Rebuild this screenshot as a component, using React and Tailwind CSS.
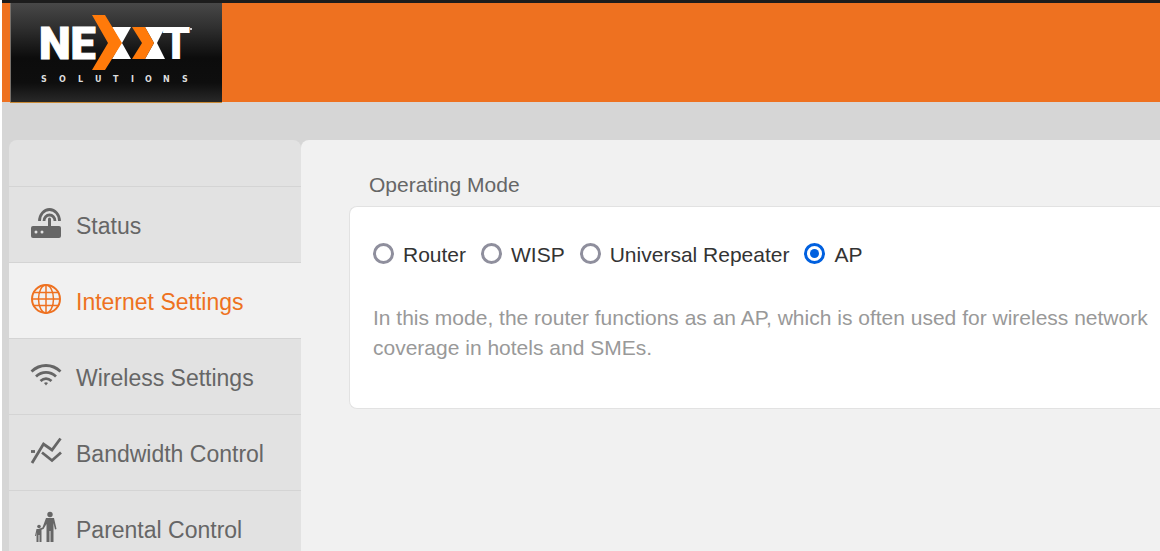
import React, { useState } from "react";

const modes = [
  { id: "router", label: "Router" },
  { id: "wisp", label: "WISP" },
  { id: "repeater", label: "Universal Repeater" },
  { id: "ap", label: "AP" },
];

const Logo = () => (
  <svg width="212" height="100" viewBox="10 3 212 100" className="block" role="img">
    <defs>
      <linearGradient id="logoBg" x1="0" y1="0" x2="0" y2="1">
        <stop offset="0" stopColor="#484848" />
        <stop offset="0.25" stopColor="#2f2f2f" />
        <stop offset="0.55" stopColor="#0c0c0c" />
        <stop offset="0.8" stopColor="#0e0e0e" />
        <stop offset="1" stopColor="#2a2a2a" />
      </linearGradient>
    </defs>
    <rect x="10" y="3" width="212" height="100" fill="url(#logoBg)" />
    <rect x="10" y="3" width="1" height="100" fill="#77706a" />
    <rect x="10" y="102" width="212" height="1" fill="#c98a35" />
    <text
      x="39"
      y="59"
      fontFamily="Roboto"
      fontWeight="900"
      fontSize="45"
      fill="#fff"
      stroke="#fff"
    >
      NE
    </text>
    <path d="M112 27h19l-9 16 9 16h-19l9-16z" fill="#fff" />
    <path d="M145 27h20l-8 16 8 16h-20l9-16z" fill="#fff" />
    <path d="M92 15h13l17 28-17 27H92l16-27z" fill="#ff7a0a" />
    <path d="M132 27h13l9 16-9 16h-13l10-16z" fill="#ff7a0a" />
    <text
      x="162"
      y="59"
      fontFamily="Roboto"
      fontWeight="900"
      fontSize="45"
      fill="#fff"
    >
      T
    </text>
    <circle cx="191" cy="29" r="1" fill="#fff" />
    <text
      x="41 59 78 95 113 131 145 163 182"
      y="82"
      fontFamily="DejaVu Sans"
      fontWeight="700"
      fontSize="8"
      fill="#ddd"
    >
      SOLUTIONS
    </text>
  </svg>
);

const RouterIcon = () => (
  <svg width="32" height="32" viewBox="0 0 32 32" fill="none" stroke="currentColor">
    <rect x="1" y="19" width="30" height="12" rx="2" fill="currentColor" stroke="none" />
    <path d="M19.500 19v-7" strokeWidth="3" strokeLinecap="round" />
    <path
      d="M14 14a5.500 6 0 0 1 11 0M9.500 14a10 11.500 0 0 1 20 0"
      strokeWidth="2.800"
    />
    <circle cx="6" cy="25" r="1.500" fill="#e2e2e2" stroke="none" />
    <circle cx="12" cy="25" r="1.500" fill="#e2e2e2" stroke="none" />
  </svg>
);

const GlobeIcon = () => (
  <svg
    width="32"
    height="32"
    viewBox="0 0 32 32"
    fill="none"
    stroke="currentColor"
    strokeWidth="1.500"
  >
    <circle cx="16" cy="16" r="14" strokeWidth="2" />
    <ellipse cx="16" cy="16" rx="7.500" ry="14" />
    <path d="M16 2v28M2 16h28M4 9.500h24M4 22.500h24" />
  </svg>
);

const WifiIcon = () => (
  <svg
    width="32"
    height="32"
    viewBox="0 0 32 32"
    fill="none"
    stroke="currentColor"
    strokeWidth="2.800"
  >
    <path d="M1.500 12.500C10 4.500 22 4.500 30.500 12.500" />
    <path d="M6 17.500c6-5.500 14-5.500 20 0" />
    <path d="M10.500 22c3.500-3 7.500-3 11 0" />
    <path d="M14 24q2-1.500 4 0l-2 2.500z" fill="currentColor" stroke="none" />
  </svg>
);

const BandwidthIcon = () => (
  <svg
    width="32"
    height="32"
    viewBox="0 0 32 32"
    fill="none"
    stroke="currentColor"
    strokeWidth="2.800"
  >
    <path d="M2 28L13.500 9l8.500 6L30.500 3.500" />
    <path d="M12 17.500l10 8 9-8" />
    <path d="M1 16.500h4" />
  </svg>
);

const FamilyIcon = () => (
  <svg width="32" height="32" viewBox="0 0 32 32" fill="currentColor">
    <circle cx="20" cy="3.500" r="2.700" />
    <path d="M16 7h8l2.500 11-1.500.5L23.500 12v19h-3V20h-1v11h-3V13l-3 5-4.500 1.500-.5-1.500 4-1.500z" />
    <circle cx="9" cy="15.500" r="1.800" />
    <path d="M6.500 18h5v13H9.500v-7h-1v7h-2v-10l-.5 4H5z" />
  </svg>
);

const menu = [
  { label: "Status", icon: RouterIcon },
  { label: "Internet Settings", icon: GlobeIcon, active: true },
  { label: "Wireless Settings", icon: WifiIcon },
  { label: "Bandwidth Control", icon: BandwidthIcon },
  { label: "Parental Control", icon: FamilyIcon },
];

const App = () => {
  const [mode, setMode] = useState("ap");

  return (
    <div className="flex min-h-screen flex-col border-l-2 border-white bg-[#d6d6d6] font-['Liberation_Sans',Arial,sans-serif]">
      {/* Header */}
      <header className="h-[102px] border-t-3 border-[#1c1c1c] bg-[#ee7120] pl-2">
        <Logo />
      </header>

      <div className="mt-[38px] flex flex-1 pl-[7px]">
        {/* Sidebar */}
        <nav className="w-[292px] shrink-0 rounded-t-lg bg-[#e2e2e2]">
          <div className="h-[47px] border-b border-[#d4d4d4]" />
          <ul>
            {menu.map(({ label, icon: Icon, active }) => (
              <li key={label} className="border-b border-[#d4d4d4]">
                <a
                  href="#"
                  className={
                    active
                      ? "flex h-[75px] items-center gap-[14px] bg-[#f1f1f1] pt-1 pl-[21px] text-[23px] text-[#ee7120]"
                      : "flex h-[75px] items-center gap-[14px] pt-1 pl-[21px] text-[23px] text-[#666]"
                  }
                >
                  <span className="pb-2">
                    <Icon />
                  </span>
                  {label}
                </a>
              </li>
            ))}
          </ul>
        </nav>

        {/* Content */}
        <main className="flex-1 rounded-tl-lg bg-[#f1f1f1] pl-12">
          <h1 className="mt-[30px] pl-5 text-[21px] leading-[30px] text-[#666]">
            Operating Mode
          </h1>
          <section className="mt-[6px] rounded-l-lg border border-r-0 border-[#e2e2e2] bg-white pt-[33px] pr-2 pb-[45px] pl-[23px] text-[21px] leading-[30px]">
            <div className="flex gap-[15px] text-[#333]">
              {modes.map((m) => (
                <label key={m.id} htmlFor={m.id} className="flex items-center gap-[9px]">
                  <input
                    type="radio"
                    id={m.id}
                    name="mode"
                    checked={mode === m.id}
                    onChange={() => setMode(m.id)}
                    className="mb-1 size-[21px] appearance-none rounded-full border-3 border-[#8f8f9d] bg-white checked:border-[#0060df] checked:bg-[#0060df] checked:bg-clip-content checked:p-[3px]"
                  />
                  {m.label}
                </label>
              ))}
            </div>
            <p className="mt-[33px] text-[#999]">
              In this mode, the router functions as an AP, which is often used
              for wireless network coverage in hotels and SMEs.
            </p>
          </section>
        </main>
      </div>
    </div>
  );
};

export default App;
